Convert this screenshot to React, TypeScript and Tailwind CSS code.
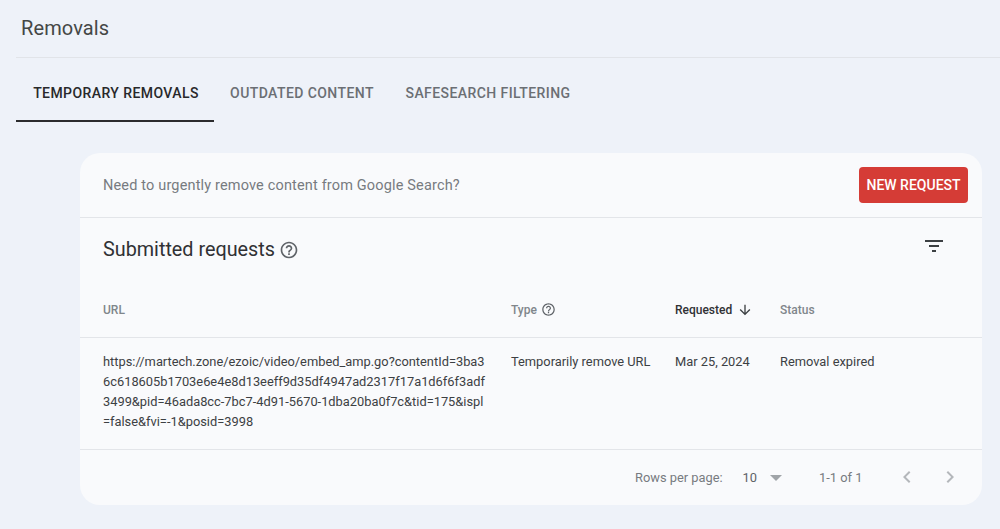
import React from 'react';

const HelpIcon = ({ size }: { size: number }) => (
  <svg width={size} height={size} viewBox="0 0 24 24" fill="#5f6368" className="shrink-0">
    <path d="M11 18h2v-2h-2v2zm1-16C6.48 2 2 6.48 2 12s4.48 10 10 10 10-4.48 10-10S17.52 2 12 2zm0 18c-4.41 0-8-3.59-8-8s3.59-8 8-8 8 3.59 8 8-3.59 8-8 8zm0-14c-2.21 0-4 1.79-4 4h2c0-1.1.9-2 2-2s2 .9 2 2c0 2-3 1.75-3 5h2c0-2.25 3-2.5 3-5 0-2.21-1.79-4-4-4z" />
  </svg>
);

const App: React.FC = () => {
  return (
    <div className="h-[529px] w-[1000px] overflow-hidden bg-[#eef2f9] font-['Roboto',sans-serif]">
      <div className="ml-[16px] h-[58px] border-b border-[#e1e4e9] pl-[5px] pt-[14px]">
        <h1 className="text-[20px] leading-[28px] tracking-[0.1px] text-[#444746]">Removals</h1>
      </div>

      <div className="ml-[16px] flex h-[64px] text-[14px] font-medium tracking-[0.42px]">
        <div className="flex w-[198px] items-center justify-center border-b-2 border-[#2b2c2e] pl-[2px] pt-[8px] text-[#28292b]">TEMPORARY REMOVALS</div>
        <div className="flex w-[174px] items-center justify-center pb-[2px] pl-[2px] pt-[8px] text-[#6b6f74]">OUTDATED CONTENT</div>
        <div className="flex w-[198px] items-center justify-center pb-[2px] pl-[2px] pt-[8px] text-[#6b6f74]">SAFESEARCH FILTERING</div>
      </div>

      <div className="ml-[80px] mt-[31px] h-[352px] w-[902px] rounded-[20px] bg-[#f9fafc]">
        <div className="flex h-[65px] items-center justify-between border-b border-[#e3e5e9] pl-[23px] pr-[14px]">
          <span className="pt-[2px] text-[14.5px] tracking-[0.16px] text-[#777b80]">Need to urgently remove content from Google Search?</span>
          <button className="h-[36px] w-[109px] rounded-[4px] bg-[#d53c36] text-[14px] font-medium text-white">NEW REQUEST</button>
        </div>

        <div className="flex h-[72px] items-start justify-between pl-[23px] pr-[36px]">
          <div className="flex items-center gap-[4px] pt-[20px]">
            <h2 className="text-[19.8px] leading-[24px] text-[#303134]">Submitted requests</h2>
            <HelpIcon size={20} />
          </div>
          <svg width="24" height="24" viewBox="0 0 24 24" fill="#3c4043" className="mt-[16px]">
            <path d="M3 6h18v2H3V6zm4 5h10v2H7v-2zm3 5h4v2h-4v-2z" />
          </svg>
        </div>

        <div className="flex h-[48px] items-center border-b border-[#e3e5e9] pb-[8px] text-[12px] font-medium text-[#80868b]">
          <div className="w-[431px] pl-[23px]">URL</div>
          <div className="flex w-[164px] items-center gap-[4px]">
            Type
            <HelpIcon size={15} />
          </div>
          <div className="flex w-[105px] items-center gap-[5px] text-[#303134]">
            Requested
            <svg width="16" height="16" viewBox="0 0 24 24" fill="#3c4043">
              <path d="M20 12l-1.41-1.41L13 16.17V4h-2v12.17l-5.58-5.59L4 12l8 8 8-8z" />
            </svg>
          </div>
          <div>Status</div>
        </div>

        <div className="flex h-[112px] items-start border-b border-[#e3e5e9] pt-[14px] text-[12.85px] leading-[20px] text-[#3c4043]">
          <div className="w-[431px] pl-[23px]">
            <div className="whitespace-nowrap">https://martech.zone/ezoic/video/embed_amp.go?contentId=3ba3</div>
            <div className="whitespace-nowrap">6c618605b1703e6e4e8d13eeff9d35df4947ad2317f17a1d6f6f3adf</div>
            <div className="whitespace-nowrap">3499&amp;pid=46ada8cc-7bc7-4d91-5670-1dba20ba0f7c&amp;tid=175&amp;ispl</div>
            <div className="whitespace-nowrap">=false&amp;fvi=-1&amp;posid=3998</div>
          </div>
          <div className="w-[164px]">Temporarily remove URL</div>
          <div className="w-[105px]">Mar 25, 2024</div>
          <div>Removal expired</div>
        </div>

        <div className="flex h-[55px] items-center text-[12.85px] text-[#777b80]">
          <span className="ml-[555px]">Rows per page:</span>
          <span className="ml-[20px] text-[#5f6368]">10</span>
          <span className="ml-[13px] h-0 w-0 border-x-[6px] border-t-[6px] border-x-transparent border-t-[#a0a4a8]" />
          <span className="ml-[37px]">1-1 of 1</span>
          <svg width="24" height="24" viewBox="0 0 24 24" fill="#b4b7bb" className="ml-[33px] mb-[2px]">
            <path d="M15.41 7.41L14 6l-6 6 6 6 1.41-1.41L10.83 12z" />
          </svg>
          <svg width="24" height="24" viewBox="0 0 24 24" fill="#b4b7bb" className="ml-[19px] mb-[2px]">
            <path d="M10 6L8.59 7.41 13.17 12l-4.58 4.59L10 18l6-6z" />
          </svg>
        </div>
      </div>
    </div>
  );
};

export default App;
